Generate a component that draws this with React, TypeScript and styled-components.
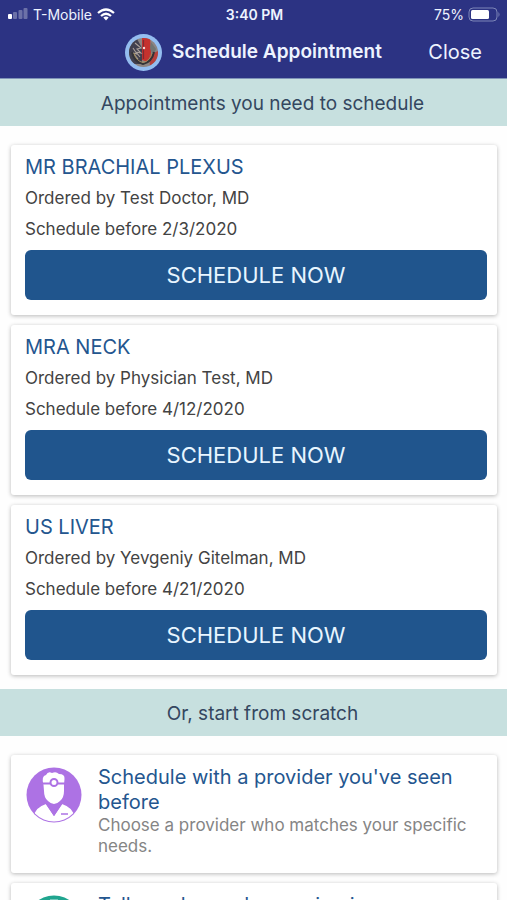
import React from "react";
import styled, { createGlobalStyle } from "styled-components";

const GlobalStyle = createGlobalStyle`
  * { box-sizing: border-box; }
  html { scrollbar-width: none; }
  body {
    margin: 0;
    background: #fefefe;
    color: #434343;
    font-family: Inter, "Liberation Sans", sans-serif;
  }
  h1, h2, h3, p { margin: 0; font-weight: 400; }
`;

const Header = styled.header`
  background: #2c3383;
  color: #eef3ff;
  border-bottom: 1px solid #7f93b8;
`;

const StatusBar = styled.div`
  display: grid;
  grid-template-columns: 1fr auto 1fr;
  align-items: center;
  height: 28px;
  padding: 0 6px 0 8px;
  font-size: 14px;
`;

const StatusGroup = styled.div<{ $end?: boolean }>`
  display: flex;
  align-items: center;
  justify-content: ${(p) => (p.$end ? "flex-end" : "flex-start")};
  gap: ${(p) => (p.$end ? 4 : 5)}px;
`;

const Clock = styled.span`
  font-weight: 600;
`;

const TitleBar = styled.div`
  display: grid;
  grid-template-columns: 1fr auto 1fr;
  align-items: center;
  height: 50px;
  padding: 0 25px 2px;
`;

const Brand = styled.div`
  grid-column: 2;
  display: flex;
  align-items: center;
  gap: 10px;
`;

const Title = styled.h1`
  && { font-weight: 600; }
  font-size: 19px;
  line-height: 24px;
`;

const CloseButton = styled.button`
  justify-self: end;
  padding: 0;
  border: 0;
  background: none;
  color: inherit;
  font: inherit;
  font-size: 20px;
  line-height: 24px;
`;

const SectionBand = styled.h2`
  padding: 13px 0 11px 18px;
  background: #c7e0df;
  color: #34475f;
  font-size: 19px;
  line-height: 23px;
  text-align: center;
`;

const CardList = styled.div`
  display: grid;
  gap: 10px;
  padding: 19px 10px 14px 11px;
`;

const Card = styled.article`
  border-radius: 3px;
  background: #fff;
  box-shadow: 0 1px 4px rgba(0, 0, 0, 0.28);
`;

const OrderCard = styled(Card)`
  padding: 10px 10px 15px 14px;
`;

const CardTitle = styled.h3`
  color: #24568f;
  font-size: 20px;
  line-height: 25px;
`;

const OrderDetail = styled.p`
  margin-top: 6px;
  font-size: 17px;
  line-height: 25px;
`;

const ScheduleButton = styled.button`
  display: block;
  width: 100%;
  height: 50px;
  margin-top: 8px;
  border: 0;
  border-radius: 6px;
  background: #20558d;
  color: #e8f5ff;
  font: inherit;
  font-size: 22px;
`;

const OptionCard = styled(Card)`
  display: flex;
  gap: 16px;
  padding: 10px 20px 16px 15px;
`;

const OptionIcon = styled.svg`
  flex: none;
  width: 56px;
  height: 56px;
  margin-top: 2px;
`;

const OptionLink = styled.a`
  color: inherit;
  text-decoration: none;
`;

const OptionDetail = styled.p`
  color: #858585;
  font-size: 17px;
  line-height: 21px;
`;

const orders = [
  { name: "MR BRACHIAL PLEXUS", by: "Test Doctor, MD", before: "2/3/2020" },
  { name: "MRA NECK", by: "Physician Test, MD", before: "4/12/2020" },
  { name: "US LIVER", by: "Yevgeniy Gitelman, MD", before: "4/21/2020" },
];

const SignalIcon = () => (
  <svg width="20" height="12" viewBox="0 0 20 12" aria-hidden="true" fill="#fff">
    <rect x="0" y="6" width="4" height="5" rx="1" />
    <g opacity=".3">
      <rect x="5" y="4" width="4" height="7" rx="1" />
      <rect x="10.500" y="2" width="4" height="9" rx="1" />
      <rect x="15.500" y="0" width="4" height="11" rx="1" />
    </g>
  </svg>
);

const WifiIcon = () => (
  <svg width="18" height="13" viewBox="0 0 18 13" aria-hidden="true" fill="none" stroke="#fff" strokeWidth="2.200">
    <path d="M1 5Q9 -2 17 5" />
    <path d="M4 8Q9 3.500 14 8" />
    <path d="M6.300 9.500Q9 7.400 11.700 9.500L9 12.500Z" fill="#fff" stroke="none" />
  </svg>
);

const BatteryIcon = () => (
  <svg width="33" height="15" viewBox="0 0 33 15" aria-hidden="true">
    <rect x="1" y="1" width="28" height="13" rx="4" fill="none" stroke="#7d86b8" />
    <rect x="3" y="3" width="18" height="9" rx="1.500" fill="#fff" />
    <path d="M30.500 5q2 2.500 0 5z" fill="#7d86b8" />
  </svg>
);

const LogoIcon = () => (
  <svg width="37" height="37" viewBox="0 0 37 37" aria-hidden="true">
    <defs>
      <clipPath id="logo-disc"><circle cx="18.500" cy="18.500" r="14.500" /></clipPath>
    </defs>
    <circle cx="18.500" cy="18.500" r="18.500" fill="#94bdf0" />
    <g clipPath="url(#logo-disc)">
      <path d="M0 0h37v37H0z" fill="#8d8582" />
      <path d="M4 8l8-3 5 9v16H7L2 22z" fill="#403f4e" />
      <path d="M17 2h8l1 17-3 9-6-2z" fill="#c5322e" />
      <path d="M24 21l9-4v10l-8 6z" fill="#b8403c" />
      <path d="M26 8l5 7-3 7-3-8z" fill="#717572" />
      <path d="M10 9l6 5-4 1 4 4-5-1 4 5M8 14l4 6-4-1 5 6" fill="none" stroke="#aaa09a" strokeWidth="1.100" />
      <path d="M7 18Q9 28 18 30Q27 28 29 18" fill="none" stroke="#333338" strokeWidth="2" />
      <path d="M9 19Q11 27 18 28.500Q25 27 27 19" fill="none" stroke="#a08a5c" strokeWidth="1" />
      <path d="M18.500 6v19" stroke="#7e2a32" strokeWidth="1.200" />
      <circle cx="19" cy="14" r="1.200" fill="#f1dcda" />
    </g>
  </svg>
);

const ProviderIcon = () => (
  <OptionIcon viewBox="0 0 56 56" aria-hidden="true">
    <defs>
      <clipPath id="provider-disc"><circle cx="28" cy="28" r="26.500" /></clipPath>
    </defs>
    <circle cx="28" cy="28" r="27.500" fill="#ad72e4" />
    <g clipPath="url(#provider-disc)">
      <path d="M17.500 18Q15 9 20 8Q22 4 26 6Q30 4 33 7Q39 7 38.500 12L38 18V24Q38 31 34 34Q28 40 22 34Q18 31 18 24Z" fill="#fff" />
      <path d="M8 50Q8 41 20 37L28 49L36 37Q48 41 48 50Q40 57 28 57T8 50Z" fill="#fff" />
      <path d="M20 36L28 48L36 36" fill="none" stroke="#ad72e4" strokeWidth="1.500" />
      <path d="M17 16.500h7m8 0h7" stroke="#ad72e4" strokeWidth="2" />
      <circle cx="28" cy="15.500" r="3.500" fill="#fff" stroke="#ad72e4" strokeWidth="2" />
      <path d="M35 47h7" stroke="#ad72e4" strokeWidth="1.500" />
    </g>
  </OptionIcon>
);

const VisitIcon = () => (
  <OptionIcon viewBox="0 0 56 56" aria-hidden="true">
    <circle cx="28" cy="28" r="27.500" fill="#20a58f" />
    <path d="M24 4h8v5h-8z" fill="#72c9bb" />
  </OptionIcon>
);

export default function App() {
  return (
    <>
      <GlobalStyle />
      <Header>
        <StatusBar>
          <StatusGroup>
            <SignalIcon />
            <span>T-Mobile</span>
            <WifiIcon />
          </StatusGroup>
          <Clock>3:40 PM</Clock>
          <StatusGroup $end>
            <span>75%</span>
            <BatteryIcon />
          </StatusGroup>
        </StatusBar>
        <TitleBar>
          <Brand>
            <LogoIcon />
            <Title>Schedule Appointment</Title>
          </Brand>
          <CloseButton type="button">Close</CloseButton>
        </TitleBar>
      </Header>
      <main>
        <SectionBand>Appointments you need to schedule</SectionBand>
        <CardList>
          {orders.map((order) => (
            <OrderCard key={order.name}>
              <CardTitle>{order.name}</CardTitle>
              <OrderDetail>Ordered by {order.by}</OrderDetail>
              <OrderDetail>Schedule before {order.before}</OrderDetail>
              <ScheduleButton type="button">SCHEDULE NOW</ScheduleButton>
            </OrderCard>
          ))}
        </CardList>
        <SectionBand>Or, start from scratch</SectionBand>
        <CardList>
          <OptionCard>
            <ProviderIcon />
            <div>
              <CardTitle><OptionLink href="#provider">Schedule with a provider you've seen before</OptionLink></CardTitle>
              <OptionDetail>Choose a provider who matches your specific needs.</OptionDetail>
            </div>
          </OptionCard>
          <OptionCard>
            <VisitIcon />
            <div>
              <CardTitle><OptionLink href="#reason">Tell us why you're coming in</OptionLink></CardTitle>
            </div>
          </OptionCard>
        </CardList>
      </main>
    </>
  );
}
